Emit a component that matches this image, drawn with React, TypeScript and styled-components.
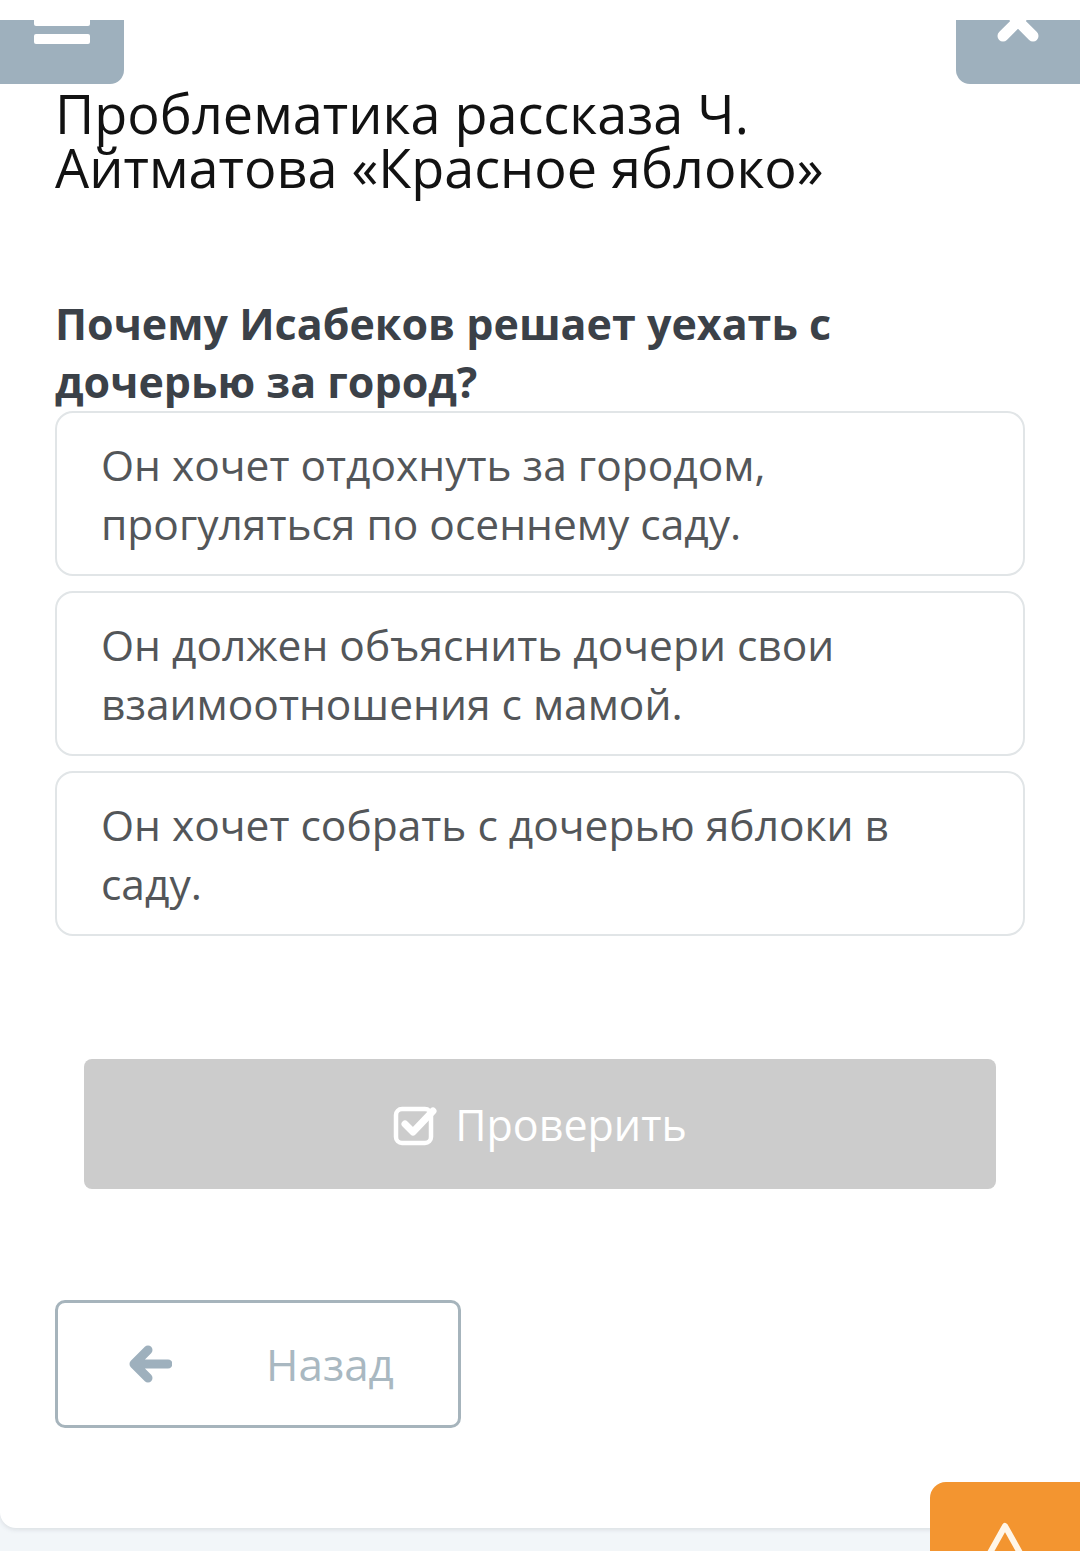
import React from 'react';
import styled, { createGlobalStyle } from 'styled-components';

const GlobalStyle = createGlobalStyle`
  html, body {
    margin: 0;
    padding: 0;
    background: #f2f6f9;
    font-family: 'Open Sans', 'Noto Sans', sans-serif;
  }
  * { box-sizing: border-box; }
`;

const Page = styled.div`
  position: relative;
  width: 1080px;
  height: 1551px;
  overflow: hidden;
  background: #f2f6f9;
`;

const Card = styled.div`
  background: #ffffff;
  height: 1528px;
  border-bottom-left-radius: 16px;
  box-shadow: 0 2px 4px rgba(120, 130, 140, 0.18);
  padding-top: 20px;
`;

const TopBar = styled.div`
  display: flex;
  justify-content: space-between;
  height: 64px;
`;

const Tab = styled.div<{ side: 'left' | 'right' }>`
  width: 124px;
  height: 64px;
  background: #9eb0bd;
  overflow: hidden;
  display: flex;
  justify-content: center;
  border-bottom-right-radius: ${(p) => (p.side === 'left' ? '14px' : '0')};
  border-bottom-left-radius: ${(p) => (p.side === 'right' ? '14px' : '0')};
`;

const Content = styled.div`
  padding: 2px 55px 0;
`;

const Title = styled.h1`
  margin: 0;
  font-size: 54px;
  line-height: 54px;
  font-weight: 400;
  color: #121212;
`;

const Question = styled.h2`
  margin: 101px 0 0;
  font-size: 43px;
  line-height: 58px;
  font-weight: 700;
  color: #3b4148;
`;

const Options = styled.div`
  display: flex;
  flex-direction: column;
  gap: 15px;
`;

const Option = styled.div`
  height: 165px;
  border: 2px solid #e1e5e7;
  border-radius: 18px;
  padding: 22px 44px;
  font-size: 42.5px;
  line-height: 59px;
  color: #535659;
  display: flex;
  align-items: center;
`;

const CheckButton = styled.div`
  margin: 123px 29px 0;
  height: 130px;
  background: #cccccc;
  border-radius: 8px;
  display: flex;
  align-items: center;
  justify-content: center;
  gap: 16px;
  color: #ffffff;
  font-size: 43px;
`;

const BackButton = styled.div`
  margin-top: 111px;
  width: 406px;
  height: 128px;
  border: 3px solid #a6b4bc;
  border-radius: 10px;
  display: flex;
  align-items: center;
  padding-left: 70px;
  gap: 94px;
  color: #a9b8c1;
  font-size: 44px;
`;

const FloatButton = styled.div`
  position: absolute;
  left: 930px;
  top: 1482px;
  width: 170px;
  height: 120px;
  background: #f39530;
  border-top-left-radius: 16px;
  display: flex;
  justify-content: center;
  padding-top: 38px;
  padding-right: 20px;
`;

const options = [
  'Он хочет отдохнуть за городом, прогуляться по осеннему саду.',
  'Он должен объяснить дочери свои взаимоотношения с мамой.',
  'Он хочет собрать с дочерью яблоки в саду.',
];

export default function App() {
  return (
    <Page>
      <GlobalStyle />
      <Card>
        <TopBar>
          <Tab side="left">
            <svg width="124" height="64" viewBox="0 0 124 64">
              <rect x="34" y="-4" width="56" height="10" rx="2" fill="#fff" />
              <rect x="34" y="14" width="56" height="10" rx="2" fill="#fff" />
            </svg>
          </Tab>
          <Tab side="right">
            <svg width="124" height="64" viewBox="0 0 124 64">
              <g stroke="#fff" strokeWidth="11" strokeLinecap="round">
                <line x1="47" y1="-14" x2="77" y2="16" />
                <line x1="77" y1="-14" x2="47" y2="16" />
              </g>
            </svg>
          </Tab>
        </TopBar>
        <Content>
          <Title>
            Проблематика рассказа Ч. Айтматова «Красное яблоко»
          </Title>
          <Question>Почему Исабеков решает уехать с дочерью за город?</Question>
          <Options>
            {options.map((o) => (
              <Option key={o}>{o}</Option>
            ))}
          </Options>
          <CheckButton>
            <svg width="46" height="44" viewBox="0 0 46 44">
              <rect x="3" y="7" width="35" height="34" rx="6" fill="none" stroke="#fff" strokeWidth="4.5" />
              <path d="M12 22 L20 30 L40 9" fill="none" stroke="#fff" strokeWidth="7" strokeLinecap="round" strokeLinejoin="round" />
            </svg>
            <span>Проверить</span>
          </CheckButton>
          <BackButton>
            <svg width="44" height="40" viewBox="0 0 44 40">
              <path d="M40 20 H8 M20 6 L6 20 L20 34" fill="none" stroke="#9eb0bd" strokeWidth="9" strokeLinecap="round" strokeLinejoin="round" />
            </svg>
            <span>Назад</span>
          </BackButton>
        </Content>
      </Card>
      <FloatButton>
        <svg width="50" height="50" viewBox="0 0 50 50">
          <path d="M25 6 L44 40 H6 Z" fill="none" stroke="#fff6e8" strokeWidth="6" strokeLinejoin="round" />
        </svg>
      </FloatButton>
    </Page>
  );
}
